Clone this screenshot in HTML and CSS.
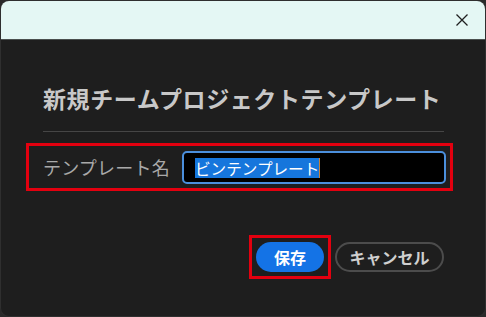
FILE: index.html
```html
<!DOCTYPE html>
<html lang="ja">
<head>
<meta charset="utf-8">
<link rel="stylesheet" href="styles.css">
</head>
<body>
<div class="window">
  <div class="titlebar">
    <svg class="close" width="14" height="14" viewBox="0 0 14 14"><path d="M1.5 1.5 L12.5 12.5 M12.5 1.5 L1.5 12.5" stroke="#1f1f1f" stroke-width="1.3" fill="none"/></svg>
  </div>
  <div class="content">
    <h1 class="heading">新規チームプロジェクトテンプレート</h1>
    <div class="divider"></div>
    <div class="mark row">
      <span class="label">テンプレート名</span>
      <div class="input"><span class="sel">ビンテンプレート</span><span class="caret"></span></div>
    </div>
    <div class="actions">
      <div class="mark save-mark"><button class="btn primary">保存</button></div>
      <button class="btn secondary">キャンセル</button>
    </div>
  </div>
</div>
</body>
</html>
```
FILE: styles.css
```css
html, body { margin: 0; padding: 0; }
body {
  background: #2a2a2a;
  width: 486px;
  height: 317px;
  overflow: hidden;
  font-family: "Noto Sans CJK JP", "Noto Sans", sans-serif;
}
.window {
  box-sizing: border-box;
  width: 486px;
  height: 317px;
  border: 1px solid #2f2f2f;
  border-radius: 9px;
  background: #1e1e1e;
  overflow: hidden;
  display: flex;
  flex-direction: column;
}
.titlebar {
  height: 38px;
  flex: none;
  background: #e4f7f4;
  border-bottom: 1px solid #4a4f4e;
  display: flex;
  align-items: center;
  justify-content: flex-end;
  padding-right: 16px;
}
.close { display: block; margin-top: 0; }
.content {
  display: flex;
  flex-direction: column;
  padding: 0 41px 0 25px;
}
.heading {
  margin: 43px 0 0 17px;
  font-size: 23px;
  line-height: 30px;
  font-weight: 700;
  color: #c8c8c8;
  letter-spacing: 0.6px;
  white-space: nowrap;
}
.divider {
  margin: 18px 0 0 17px;
  height: 1px;
  background: #464646;
}
.mark { border: 3px solid #e3000f; box-sizing: border-box; }
.row {
  margin-top: 11px;
  width: 427px;
  height: 48px;
  display: flex;
  align-items: center;
  padding: 0 4px 0 14px;
}
.label {
  font-size: 18px;
  color: #a9a9a9;
  width: 127px;
  margin-right: 12px;
  white-space: nowrap;
  line-height: 24px;
  letter-spacing: 0.2px;
}
.input {
  box-sizing: border-box;
  flex: 1;
  height: 33px;
  margin-top: 1px;
  border: 2px solid #4b8fdc;
  border-radius: 5px;
  background: #000;
  display: flex;
  align-items: center;
  padding-left: 11px;
}
.sel {
  background: #1676dc;
  color: #fff;
  font-size: 15.6px;
  line-height: 20px;
  white-space: nowrap;
}
.caret {
  width: 1px;
  height: 20px;
  background: #c8813a;
}
.actions {
  margin-top: 44px;
  display: flex;
  align-items: center;
  justify-content: flex-end;
  gap: 4px;
}
.save-mark { padding: 4px; }
.btn {
  font-family: "Noto Sans CJK JP", "Noto Sans", sans-serif;
  font-weight: 700;
  font-size: 16px;
  height: 30px;
  border-radius: 15px;
  box-sizing: border-box;
  padding: 0;
  display: flex;
  align-items: center;
  justify-content: center;
}
.primary {
  width: 68px;
  background: #1473e6;
  color: #fff;
  border: none;
}
.secondary {
  width: 109px;
  background: transparent;
  color: #cfcfcf;
  border: 2px solid #4c4c4c;
}
```
